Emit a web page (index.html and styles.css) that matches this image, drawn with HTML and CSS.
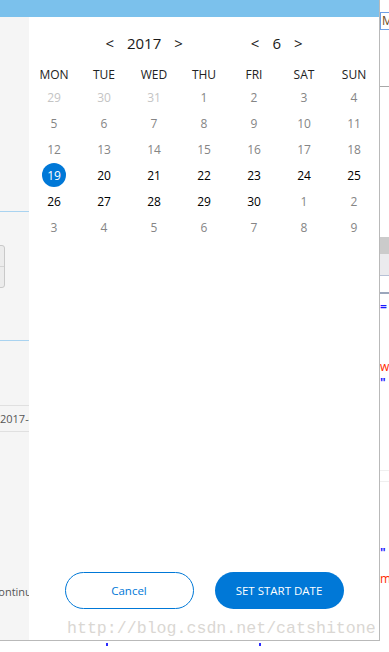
FILE: index.html
```html
<!DOCTYPE html>
<html>
<head lang="en">
    <meta charset="utf-8">
    <title>Start date</title>
    <link rel="stylesheet" href="styles.css">
</head>
<body>
<div class="screen">
    <div class="window">
        <div class="titlebar"></div>
        <div class="main">
            <div class="side">
                <div class="side-line first"></div>
                <div class="side-box"><div class="side-box-mid"></div></div>
                <div class="side-line second"></div>
                <div class="side-field">2017-06</div>
                <div class="side-text">continue</div>
            </div>
            <div class="picker">
                <div class="nav">
                    <div class="nav-group">
                        <span class="arrow">&lt;</span><span class="nav-value">2017</span><span class="arrow">&gt;</span>
                    </div>
                    <div class="nav-group">
                        <span class="arrow">&lt;</span><span class="nav-value">6</span><span class="arrow">&gt;</span>
                    </div>
                </div>
                <div class="week">
                    <span>MON</span><span>TUE</span><span>WED</span><span>THU</span><span>FRI</span><span>SAT</span><span>SUN</span>
                </div>
                <div class="days">
                    <span class="day other">29</span><span class="day other">30</span><span class="day other">31</span>
                    <span class="day past">1</span><span class="day past">2</span><span class="day past">3</span><span class="day past">4</span>
                    <span class="day past">5</span><span class="day past">6</span><span class="day past">7</span><span class="day past">8</span>
                    <span class="day past">9</span><span class="day past">10</span><span class="day past">11</span>
                    <span class="day past">12</span><span class="day past">13</span><span class="day past">14</span><span class="day past">15</span>
                    <span class="day past">16</span><span class="day past">17</span><span class="day past">18</span>
                    <span class="day"><b class="selected">19</b></span><span class="day">20</span><span class="day">21</span><span class="day">22</span>
                    <span class="day">23</span><span class="day">24</span><span class="day">25</span>
                    <span class="day">26</span><span class="day">27</span><span class="day">28</span><span class="day">29</span>
                    <span class="day">30</span><span class="day past">1</span><span class="day past">2</span>
                    <span class="day past">3</span><span class="day past">4</span><span class="day past">5</span><span class="day past">6</span>
                    <span class="day past">7</span><span class="day past">8</span><span class="day past">9</span>
                </div>
                <div class="actions">
                    <div class="btn cancel">Cancel</div>
                    <div class="btn primary">SET START DATE</div>
                </div>
            </div>
        </div>
    </div>
    <div class="code">
        <div class="code-tab">M</div>
        <div class="code-rule"></div>
        <div class="code-band dark"></div>
        <div class="code-band light"></div>
        <div class="code-band white"></div>
        <div class="code-line"><span class="blue">=</span></div>
        <div class="code-line w1"><span class="red">w</span></div>
        <div class="code-line w2"><span class="blue">"</span></div>
        <div class="code-faint"></div>
        <div class="code-line w3"><span class="blue">"</span></div>
        <div class="code-line w4"><span class="red">m</span></div>
    </div>
</div>
<div class="below"><span class="mark"></span><span class="mark second"></span></div>
<div class="watermark">http://blog.csdn.net/catshitone</div>
</body>
</html>
```

FILE: styles.css
```css
body {
    margin: 0;
    width: 389px;
    height: 652px;
    overflow: hidden;
    position: relative;
    background: #fff;
    font-family: "Open Sans", "Noto Sans", sans-serif;
    color: #111;
}

.screen {
    display: flex;
    height: 641px;
}

.window {
    width: 379px;
    border-right: 1px solid #b9b9b9;
    border-bottom: 1px solid #b9b9b9;
    display: flex;
    flex-direction: column;
}

.titlebar {
    height: 17px;
    background: #7bc1ec;
}

.main {
    flex: 1;
    display: flex;
}

/* left page behind the flyout */
.side {
    width: 29px;
    background: #f5f5f5;
    overflow: hidden;
    font-size: 11px;
    color: #555;
    white-space: nowrap;
}

.side-line {
    height: 1px;
    background: #a9d3f0;
}

.side-line.first {
    margin-top: 194px;
}

.side-box {
    margin: 33px 0 0 -9px;
    width: 12px;
    height: 41px;
    border: 1px solid #c9c9c9;
    border-radius: 3px;
    background: #ececec;
    display: flex;
    align-items: center;
}

.side-box-mid {
    width: 100%;
    height: 1px;
    background: #d4d4d4;
}

.side-line.second {
    margin-top: 52px;
}

.side-field {
    margin-top: 64px;
    height: 25px;
    line-height: 25px;
    border-top: 1px solid #e0e0e0;
    border-bottom: 1px solid #e0e0e0;
}

.side-text {
    margin: 152px 0 0 -7px;
    line-height: 16px;
}

/* calendar flyout */
.picker {
    flex: 1;
    display: flex;
    flex-direction: column;
    padding: 11px 0 31px;
}

.nav {
    height: 30px;
    display: flex;
    justify-content: center;
    align-items: center;
    gap: 68px;
    font-size: 15px;
    color: #1a1a1a;
}

.nav-group {
    display: flex;
    align-items: center;
    gap: 13px;
}

.arrow {
    font-size: 15px;
}

.week {
    margin-top: 8px;
    display: grid;
    grid-template-columns: repeat(7, 1fr);
    height: 18px;
    line-height: 18px;
    font-size: 12px;
    text-align: center;
    color: #222;
}

.days {
    display: grid;
    grid-template-columns: repeat(7, 1fr);
    grid-auto-rows: 26px;
    font-size: 12px;
}

.day {
    display: flex;
    align-items: center;
    justify-content: center;
    color: #000;
}

.day.other {
    color: #c4c4c4;
}

.day.past {
    color: #858585;
}

.selected {
    width: 24px;
    height: 24px;
    border-radius: 50%;
    background: #0078d7;
    color: #fff;
    font-weight: normal;
    display: flex;
    align-items: center;
    justify-content: center;
}

.actions {
    margin-top: auto;
    display: flex;
    justify-content: center;
    gap: 21px;
}

.btn {
    width: 129px;
    height: 37px;
    box-sizing: border-box;
    border-radius: 19px;
    display: flex;
    align-items: center;
    justify-content: center;
    font-size: 11.5px;
}

.btn.cancel {
    border: 1px solid #0078d7;
    color: #0078d7;
}

.btn.primary {
    background: #0078d7;
    color: #fff;
}

/* sliver of the editor on the right */
.code {
    flex: 1;
    overflow: hidden;
    font-size: 12px;
    line-height: 14px;
}

.code-tab {
    margin-top: 12px;
    height: 16px;
    line-height: 16px;
    border-top: 1px solid #6d9fe6;
    border-bottom: 1px solid #6d9fe6;
    border-left: 1px solid #6d9fe6;
    padding-left: 1px;
    color: #6e4a1c;
}

.code-rule {
    margin-top: 56px;
    height: 1px;
    background: #a8a8a8;
}

.code-band.dark {
    margin-top: 150px;
    height: 17px;
    background: #cbcbcb;
}

.code-band.light {
    height: 21px;
    background: #ebebee;
    border-bottom: 1px solid #b7c1d6;
}

.code-band.white {
    height: 16px;
    border-bottom: 2px solid #9ba6bb;
}

.code-line {
    margin-top: 6px;
    height: 14px;
}

.code-line.w1 {
    margin-top: 46px;
}

.code-line.w2 {
    margin-top: 2px;
}

.code-faint {
    margin-top: 80px;
    height: 10px;
    border-top: 1px solid #efefef;
    border-bottom: 1px solid #efefef;
}

.code-line.w3 {
    margin-top: 64px;
}

.code-line.w4 {
    margin-top: 12px;
}

.blue {
    color: #1a1aff;
    font-weight: bold;
}

.red {
    color: #ff2a00;
}

.below {
    height: 11px;
    display: flex;
    align-items: flex-start;
    padding-top: 2px;
    box-sizing: border-box;
}

.mark {
    width: 2px;
    height: 3px;
    margin-left: 106px;
    background: #2b2bff;
}

.mark.second {
    margin-left: 151px;
}

.watermark {
    position: absolute;
    left: 67px;
    top: 619px;
    font-family: "Liberation Mono", monospace;
    font-size: 16.6px;
    line-height: 20px;
    color: #dad7d3;
    white-space: nowrap;
}
```
